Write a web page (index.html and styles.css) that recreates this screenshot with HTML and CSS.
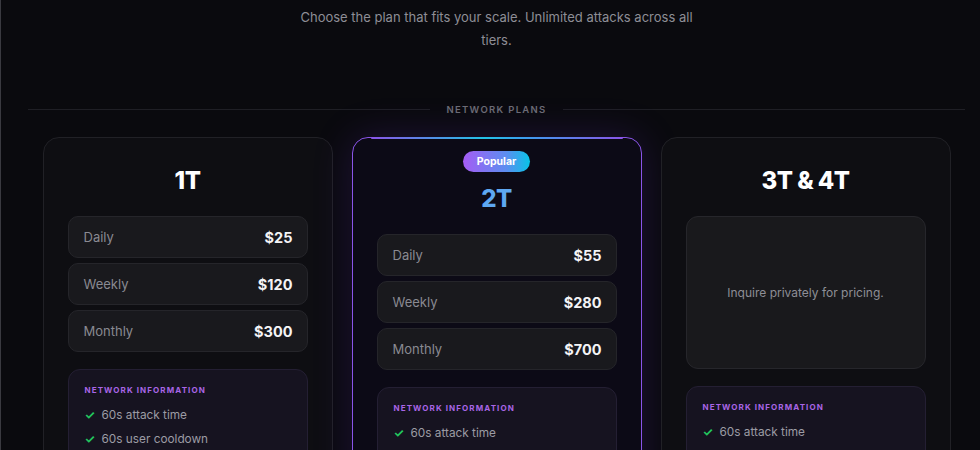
FILE: index.html
```html
<!DOCTYPE html>
<html lang="en">
<head>
<meta charset="UTF-8" />
<meta name="viewport" content="width=device-width, initial-scale=1" />
<title>Network Plans</title>
<link rel="stylesheet" href="styles.css">
</head>
<body>

<div class="page">
  <p class="intro">Choose the plan that fits your scale. Unlimited attacks across all tiers.</p>

  <div class="section-title">
    <span>Network Plans</span>
  </div>

  <div class="plans">
    <!-- 1T -->
    <div class="plan">
      <h2 class="plan-name">1T</h2>
      <div class="prices">
        <div class="price-row"><span>Daily</span><b>$25</b></div>
        <div class="price-row"><span>Weekly</span><b>$120</b></div>
        <div class="price-row"><span>Monthly</span><b>$300</b></div>
      </div>
      <div class="info">
        <div class="info-title">Network Information</div>
        <ul>
          <li><span class="check">&#10003;</span>60s attack time</li>
          <li><span class="check">&#10003;</span>60s user cooldown</li>
        </ul>
      </div>
    </div>

    <!-- 2T (popular) -->
    <div class="plan popular">
      <span class="badge">Popular</span>
      <h2 class="plan-name">2T</h2>
      <div class="prices">
        <div class="price-row"><span>Daily</span><b>$55</b></div>
        <div class="price-row"><span>Weekly</span><b>$280</b></div>
        <div class="price-row"><span>Monthly</span><b>$700</b></div>
      </div>
      <div class="info">
        <div class="info-title">Network Information</div>
        <ul>
          <li><span class="check">&#10003;</span>60s attack time</li>
          <li><span class="check">&#10003;</span>60s user cooldown</li>
        </ul>
      </div>
    </div>

    <!-- 3T & 4T -->
    <div class="plan">
      <h2 class="plan-name">3T &amp; 4T</h2>
      <div class="inquire">Inquire privately for pricing.</div>
      <div class="info">
        <div class="info-title">Network Information</div>
        <ul>
          <li><span class="check">&#10003;</span>60s attack time</li>
          <li><span class="check">&#10003;</span>60s user cooldown</li>
        </ul>
      </div>
    </div>
  </div>
</div>

</body>
</html>
```

FILE: styles.css
```css
/* Reset & base */
* {
  box-sizing: border-box;
}
body {
  margin: 0;
  background: #0a0a0e;
  color: #e8e8ec;
  font-family: Inter, 'Noto Sans', sans-serif;
  overflow: hidden;
  height: 100vh;
}

.page {
  min-height: 100vh;
  border-left: 1px solid #3a3a40;
  padding: 6px 15px 0 27px;
}

/* Intro text */
.intro {
  max-width: 420px;
  margin: 0 auto;
  text-align: center;
  font-size: 13px;
  line-height: 23px;
  color: #8e8e96;
}

/* Divider with label */
.section-title {
  display: flex;
  align-items: center;
  gap: 16px;
  margin-top: 52px;
}
.section-title::before,
.section-title::after {
  content: '';
  flex: 1;
  height: 1px;
  background: #1f1f25;
}
.section-title span {
  font-size: 9.5px;
  font-weight: 600;
  letter-spacing: 1.3px;
  text-transform: uppercase;
  color: #6c6c74;
}

/* Plans grid */
.plans {
  display: grid;
  grid-template-columns: repeat(3, 290px);
  gap: 19px;
  justify-content: center;
  margin-top: 22px;
}

.plan {
  position: relative;
  background: #0e0e12;
  border: 1px solid #212126;
  border-radius: 16px;
  padding: 28px 24px 24px;
  display: flex;
  flex-direction: column;
  align-items: center;
}

.plan-name {
  margin: 0;
  font-size: 24px;
  line-height: 30px;
  font-weight: 800;
  color: #ffffff;
  letter-spacing: -0.5px;
}

/* Highlighted middle plan */
.popular {
  background: #0c0a16;
  border: 1.5px solid #8a55e8;
  box-shadow: 0 0 40px rgba(124, 58, 237, 0.18);
  padding-top: 13px;
}
.popular::before {
  content: '';
  position: absolute;
  top: -1.5px;
  left: 18px;
  right: 18px;
  height: 2px;
  border-radius: 2px;
  background: linear-gradient(90deg, #8a55e8, #22c3e6 45%, #3aa0ef 60%, #8a55e8);
}
.popular .plan-name {
  color: #5ea8f2;
  margin-top: 12px;
}

.badge {
  display: inline-block;
  height: 21px;
  line-height: 21px;
  padding: 0 14px;
  border-radius: 11px;
  font-size: 10.5px;
  font-weight: 700;
  color: #ffffff;
  background: linear-gradient(90deg, #a55cf4, #5b8ef0 65%, #08c4e6);
}

/* Price rows */
.prices {
  width: 100%;
  margin-top: 20px;
  display: flex;
  flex-direction: column;
  gap: 5px;
}
.price-row {
  display: flex;
  justify-content: space-between;
  align-items: center;
  height: 42px;
  padding: 0 14px 0 15px;
  background: #19191d;
  border: 1px solid #25252a;
  border-radius: 10px;
  font-size: 13px;
}
.price-row span {
  color: #8a8a92;
}
.price-row b {
  color: #f4f4f6;
  font-size: 14.5px;
  font-weight: 700;
}

.inquire {
  flex-shrink: 0;
  width: 100%;
  height: 153px;
  margin-top: 20px;
  display: flex;
  align-items: center;
  justify-content: center;
  background: #19191c;
  border: 1px solid #26262b;
  border-radius: 12px;
  font-size: 12px;
  color: #8e8e96;
}

/* Network info box */
.info {
  width: 100%;
  margin-top: 17px;
  padding: 15px 16px;
  background: #161320;
  border: 1px solid #241f33;
  border-radius: 12px;
}
.info-title {
  font-size: 8px;
  font-weight: 700;
  letter-spacing: 1.1px;
  text-transform: uppercase;
  color: #a965e6;
}
.info ul {
  list-style: none;
  margin: 8px 0 0;
  padding: 0;
}
.info li {
  font-size: 11.8px;
  line-height: 24px;
  color: #9c9ca4;
}
.check {
  display: inline-block;
  width: 17px;
  color: #22c55e;
  font-weight: 700;
  font-size: 12px;
}
```
